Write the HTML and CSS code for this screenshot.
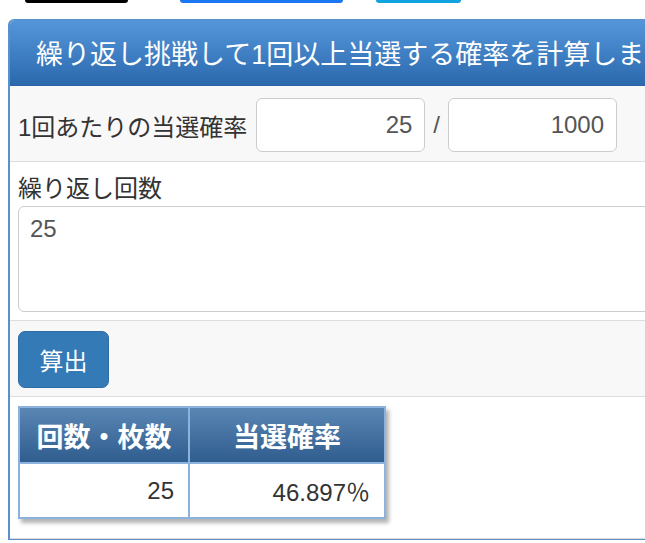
FILE: index.html
```html
<!DOCTYPE html>
<html lang="ja">
<head>
  <meta charset="UTF-8">
  <meta name="viewport" content="width=device-width, initial-scale=1.0">
  <title>繰り返し挑戦して1回以上当選する確率を計算します</title>
  <link rel="stylesheet" href="styles.css">
</head>
<body>
  <!-- シェアボタン（上端だけ見えている） -->
  <div class="share-bar">
    <span class="share share-x"></span>
    <span class="share share-fb"></span>
    <span class="share share-tw"></span>
  </div>

  <div class="panel">
    <div class="panel-heading">
      <h3 class="panel-title">繰り返し挑戦して1回以上当選する確率を計算します</h3>
    </div>

    <div class="row row-gray rate-row">
      <label class="label">1回あたりの当選確率</label>
      <input class="input" type="text" value="25">
      <span class="slash">/</span>
      <input class="input" type="text" value="1000">
    </div>

    <div class="row">
      <label class="label block">繰り返し回数</label>
      <textarea class="textarea">25</textarea>
    </div>

    <div class="row row-gray btn-row">
      <button class="btn" type="button">算出</button>
    </div>

    <div class="row result-row">
      <table class="result">
        <thead>
          <tr>
            <th class="col-count">回数・枚数</th>
            <th>当選確率</th>
          </tr>
        </thead>
        <tbody>
          <tr>
            <td>25</td>
            <td>46.897<span class="pct">％</span></td>
          </tr>
        </tbody>
      </table>
    </div>
  </div>
</body>
</html>
```

FILE: styles.css
```css
body {
  margin: 0;
  background-color: #fff;
  font-family: "Liberation Sans", "Noto Sans CJK JP", sans-serif;
  color: #333;
  overflow: hidden;
}

.share-bar {
  display: flex;
  height: 3px;
  padding-left: 25px;
  overflow: hidden;
}

.share {
  display: block;
  height: 3px;
  border-radius: 0 0 6px 6px;
}

.share-x {
  width: 103px;
  background-color: #000;
  margin-right: 52px;
}

.share-fb {
  width: 163px;
  background-color: #1b77f2;
  margin-right: 33px;
}

.share-tw {
  width: 85px;
  background-color: #0fa3df;
}

.panel {
  margin: 16px 0 0 8px;
  width: 700px;
  border: 1px solid #5a90cc;
  border-left-width: 2px;
  border-radius: 6px 6px 0 0;
  overflow: hidden;
}

.panel-heading {
  height: 65px;
  display: flex;
  align-items: center;
  padding-left: 26px;
  background: linear-gradient(to bottom, #5596da, #2b69ad);
  border-bottom: 1px solid #2a64a4;
}

.panel-title {
  margin: 0;
  color: #fff;
  font-size: 27px;
  font-weight: normal;
  white-space: nowrap;
}

.row {
  padding: 10px 8px 8px 8px;
  border-bottom: 1px solid #ddd;
  background-color: #fff;
}

.row-gray {
  background-color: #f8f8f8;
}

.label {
  font-size: 24px;
  color: #333;
}

.label.block {
  display: block;
  line-height: 33px;
  margin-bottom: 1px;
}

.rate-row {
  display: flex;
  align-items: center;
  gap: 9px;
  height: 76px;
  padding-top: 3px;
  padding-bottom: 0;
  box-sizing: border-box;
}

.input {
  width: 169px;
  height: 54px;
  box-sizing: border-box;
  border: 1px solid #ccc;
  border-radius: 6px;
  padding: 0 12px;
  font-family: inherit;
  font-size: 24px;
  color: #555;
  text-align: right;
  background-color: #fff;
}

.slash {
  font-size: 24px;
  color: #555;
  margin: 0 -1px;
}

.textarea {
  display: block;
  width: 660px;
  height: 106px;
  box-sizing: border-box;
  border: 1px solid #ccc;
  border-radius: 6px;
  padding: 8px 11px;
  font-family: inherit;
  font-size: 24px;
  color: #555;
  resize: none;
}

.btn-row {
  padding-top: 10px;
  padding-bottom: 8px;
}

.btn {
  display: block;
  width: 91px;
  height: 57px;
  background-color: #337ab7;
  border: 1px solid #2e6da4;
  border-radius: 7px;
  color: #fff;
  font-family: inherit;
  font-size: 24px;
  padding: 0;
}

.result-row {
  height: 142px;
  box-sizing: border-box;
  padding-top: 9px;
}

.result {
  border-collapse: collapse;
  width: 368px;
  box-shadow: 3px 4px 4px rgba(0, 0, 0, 0.3);
}

.result th {
  height: 54px;
  padding: 0;
  background: linear-gradient(to bottom, #5a86b4, #2f5d8e);
  color: #fff;
  font-size: 27px;
  font-weight: bold;
  border: 2px solid #8cb3dd;
  border-bottom: none;
}

.result th.col-count {
  width: 168px;
}

.result td {
  height: 53px;
  padding: 0 14px 0 0;
  text-align: right;
  font-size: 24px;
  color: #333;
  border: 2px solid #8cb3dd;
}

.result .pct {
  font-family: "Noto Sans CJK JP", sans-serif;
}
```
